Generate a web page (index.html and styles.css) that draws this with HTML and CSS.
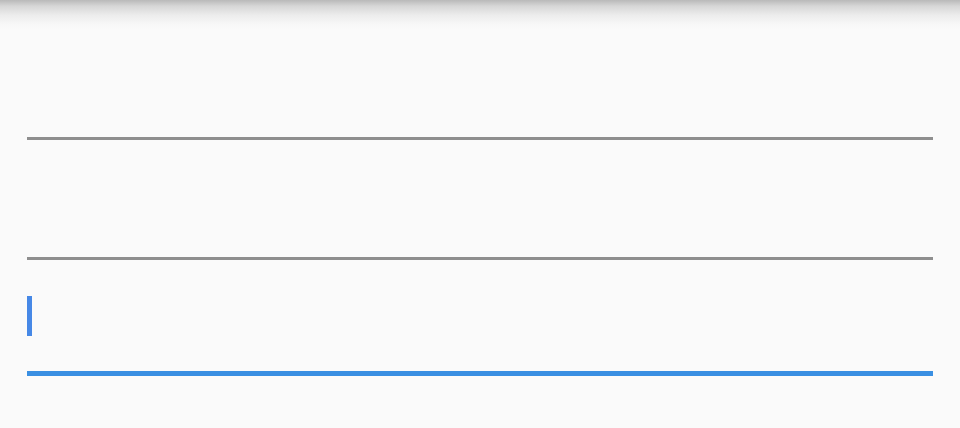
FILE: index.html
```html
<!DOCTYPE html>
<html>
<head>
<meta charset="utf-8">
<link rel="stylesheet" href="styles.css">
</head>
<body>
<div class="appbar-shadow"></div>
<main class="form">
  <div class="field field-first"></div>
  <div class="field"></div>
  <div class="field field-focused">
    <span class="caret"></span>
  </div>
</main>
</body>
</html>
```
FILE: styles.css
```css
html, body {
  margin: 0;
  padding: 0;
  background: #fafafa;
  font-family: "Roboto", "Liberation Sans", sans-serif;
}
body {
  width: 960px;
  height: 428px;
  overflow: hidden;
}
.appbar-shadow {
  height: 30px;
  background: linear-gradient(to bottom, #b9b9b9 0%, #d6d6d6 20%, #ececec 50%, #f7f7f7 80%, #fafafa 100%);
}
.form {
  display: flex;
  flex-direction: column;
  padding: 0 27px;
}
.field {
  height: 117px;
  border-bottom: 3px solid #8e8e8e;
  box-sizing: content-box;
}
.field-first {
  height: 107px;
}
.field-focused {
  height: 75px;
  padding-top: 36px;
  border-bottom: 5px solid #3a8fe2;
}
.caret {
  display: block;
  width: 5px;
  height: 40px;
  background: #4688e6;
}
```
